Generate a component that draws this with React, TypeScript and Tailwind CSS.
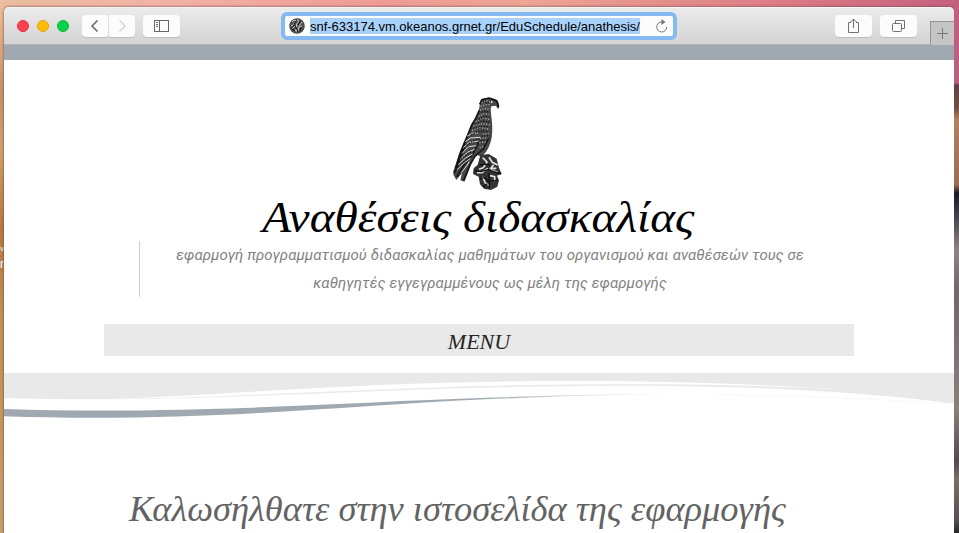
import type { ReactNode } from "react";

function ToolButton({ label, className, children }: { label: string; className: string; children: ReactNode }) {
  return (
    <button aria-label={label} className={`flex h-[22px] items-center justify-center bg-[#fcfcfc] shadow-[0_1px_0_#bdbdbd] ${className}`}>
      {children}
    </button>
  );
}

function Eagle() {
  return (
    <svg width="100" height="115" viewBox="0 0 300 345" fill="none" aria-label="Eagle emblem">
      <path fill="#484848" d="M152 45C160 37 180 36 192 41C204 44 209 54 207 69L203 71L198 62L184 64C180 75 184 88 185 102C187 120 188 139 185 159C180 180 174 195 162 208L154 217L143 210L128 221L118 251L103 290L91 286L96 264L79 285L70 269L70 258L77 240L86 209L100 174L113 145L123 118L140 94L147 73Z" />
      <path stroke="#151515" strokeWidth="5" d="M149 58L156 44L178 39L200 48L206 66M148 76L138 98L124 125L112 154L94 197L76 250M147 169L128 208L106 234L80 276M177 158L159 193L135 213L119 242L101 287M106 177L88 229L73 264" />
      <path stroke="#e2e2e2" strokeWidth="3" d="M112 153L127 145L145 144M106 170L122 159L150 157M100 188L117 172L145 168M96 205L116 185L139 182M91 222L112 202L134 193M85 239L107 219L128 207M82 253L101 235L121 220M94 263L109 244L118 230" />
      <path stroke="#b9b9b9" strokeWidth="4" strokeDasharray="3 5" d="M155 53L170 47L184 53M152 64L168 59L180 59M150 76L163 70L177 73M146 94L162 86L178 89M137 110L158 99L180 104M130 123L151 116L180 119M126 137L145 127L179 132M158 148L176 145M150 160L175 158M148 173L168 171M149 188L161 184" />
      <path stroke="#171717" strokeWidth="4" strokeDasharray="4 4" d="M159 48L171 54L184 49M154 81L164 80L179 81M145 103L164 94L177 96M137 117L156 108L180 112M130 130L152 124L178 126M123 150L148 139L178 140M155 153L175 152M152 166L169 165M110 181L127 169L148 162M94 222L112 207L126 199M83 247L103 229L116 218" />
      <circle cx="185" cy="51" r="3" fill="#eee" />
      <path fill="#333" d="M151 211L176 207L200 221L207 248L215 266L201 272L207 286L202 305L183 315L162 311L150 298L146 275L129 267L131 250L143 239Z" />
      <path stroke="#e4e4e4" strokeWidth="5" d="M158 218L171 231L160 248L147 253M177 217L187 232L203 240M173 250L156 263L141 263M183 255L202 261M158 276L166 294L177 301M180 272L194 275L194 289M191 239L182 250L199 250" />
      <path stroke="#101010" strokeWidth="4" d="M149 241L166 237L180 241M132 257L153 260L174 254L213 267M150 281L165 278L174 289L203 286M177 264L178 309M159 307L172 296" />
    </svg>
  );
}

function Wave() {
  return (
    <svg className="block" width="950" height="60" viewBox="0 0 950 60" aria-hidden="true">
      <defs>
        <linearGradient id="ribbon" x1="0" x2="1" y1="0" y2="0">
          <stop offset="0" stopColor="#a0a9b2" />
          <stop offset=".68" stopColor="#a0a9b2" />
          <stop offset="1" stopColor="#dce4ec" stopOpacity="0" />
        </linearGradient>
      </defs>
      <path fill="#e9e9e9" d="M0 0H950V30.5C850 18 744 12.7 616 12.7C400 13 230 27 106 26.2C70 26.3 34 26 0 25Z" />
      <path fill="#fff" d="M106 25.8C245 21 355 8 576 8C670 8.2 746 11 831 16C745 12 690 11.2 600 11.2C390 12.3 245 24.8 106 25.8Z" />
      <path fill="url(#ribbon)" d="M0 36C180 42 347 29 476 25C570 21.8 620 21 710 20.8C622 21.4 550 23.2 476 26.6C350 32 198 50 0 43.3Z" />
      <path fill="none" stroke="#f9f9f9" d="M710 22C790 22 870 26 950 31" />
    </svg>
  );
}

export default function App() {
  return (
    <main className="h-[533px] w-[959px] overflow-hidden bg-[linear-gradient(90deg,#eabd9d,#f2b2a6_18%,#ee9b95_40%,#eda594_55%,#dc7b84_82%,#c4607f)]">
      <div className="flex h-full">
        <div className="flex w-1 shrink-0 flex-col bg-[linear-gradient(#f0c1a0,#c69368_17%,#d1a16b_28%,#b77a43_43%,#c29155_59%,#c6a16b)] pt-[242px] font-['Liberation_Sans',sans-serif] text-white">
          <span className="text-[8px] leading-[14px]">v</span>
          <span className="text-xs leading-4">r</span>
        </div>
        <div className="flex h-full w-[950px] shrink-0 flex-col pt-[7px]">
          <section className="min-h-0 flex-1 overflow-hidden rounded-t-[5px] bg-white shadow-[0_0_3px_#6b4549]">
            <header className="flex h-[38px] items-start border-t border-[#f5f5f5] bg-linear-to-b from-[#ebebeb] to-[#d3d3d3] shadow-[inset_0_-1px_0_#b5b5b5]">
              <div className="flex gap-2 pl-[13px] pt-[12px]">
                <span className="size-3 rounded-full border border-[#e53242] bg-[#ff404d]" />
                <span className="size-3 rounded-full border border-[#e6a116] bg-[#ffbd06]" />
                <span className="size-3 rounded-full border border-[#0cb839] bg-[#05d448]" />
              </div>
              <nav className="ml-[13px] mt-[7px] flex gap-px">
                <ToolButton label="Back" className="w-[26px] rounded-l-[4px] rounded-r-[2px]">
                  <svg width="10" height="14" fill="none" stroke="#656565" strokeWidth="1.5"><path d="M7.5 1.5L2 7l5.5 5.5" /></svg>
                </ToolButton>
                <ToolButton label="Forward" className="w-[26px] rounded-l-[2px] rounded-r-[4px]">
                  <svg width="10" height="14" fill="none" stroke="#d1d1d1" strokeWidth="1.3"><path d="M2.5 1.5L8 7l-5.5 5.5" /></svg>
                </ToolButton>
              </nav>
              <div className="ml-2 mt-[7px]">
                <ToolButton label="Show sidebar" className="w-[37px] rounded-[4px]">
                  <svg width="15" height="12" fill="none" stroke="#686868"><rect x=".5" y=".5" width="14" height="11" /><path d="M5.5 0v12M2 2.5h2M2 4.5h2M2 6.5h2" /></svg>
                </ToolButton>
              </div>
              <div className="ml-[101px] mt-[4px] flex h-[28px] w-[396px] items-center rounded-[6px] border-[4px] border-[#84b9f2] bg-[#fcfcfc] pl-1 pr-[5px]">
                <svg width="16" height="16" fill="none"><circle cx="8" cy="8" r="7.8" fill="#4d4d4d" /><path d="M3 4l2-2 2 1-3 4-2 1m6-6l2 1-3 4 3 1 3-4M3 11l4-4 1 3-2 3m3 0l1-4 3-1M7 14l1-3" stroke="#c7c7c7" /><path d="M7 3L4 9m7-6l-2 5m3 1l-1 4M2 10l4 3M6 7l3 7" stroke="#101010" /></svg>
                <span className="ml-[5px] flex h-4 w-[330px] items-center whitespace-nowrap bg-[#a9d2fb] pt-px font-['Liberation_Sans',Arial,sans-serif] text-[13px] tracking-[-0.02px] text-black">snf-633174.vm.okeanos.grnet.gr/EduSchedule/anathesis/</span>
                <svg className="ml-auto" width="13" height="14" fill="none"><path d="M7 3a5 5 0 1 0 4.7 5" stroke="#777" /><path d="M6.5 0l4 3-4 3z" fill="#777" /></svg>
              </div>
              <div className="ml-[158px] mt-[7px] flex gap-2">
                <ToolButton label="Share" className="w-[37px] rounded-[4px]">
                  <svg width="13" height="16" fill="none" stroke="#717171"><path d="M4 4.5H1.5v10h10v-10H9M6.5 10V1M3.5 4l3-3 3 3" /></svg>
                </ToolButton>
                <ToolButton label="Show all tabs" className="w-[37px] rounded-[4px]">
                  <svg width="13" height="13" fill="none" stroke="#717171"><rect x=".5" y="3.5" width="9" height="8" rx="1" /><path d="M3.5 3.5v-3h9v8h-3" /></svg>
                </ToolButton>
              </div>
              <button aria-label="New tab" className="ml-[13px] mt-[13px] flex h-6 w-6 items-center justify-center border-l border-t border-[#949494] bg-[#c5c5c5]">
                <svg width="11" height="11" stroke="#777"><path d="M0 5.5h11M5.5 0v11" /></svg>
              </button>
            </header>
            <div className="h-[15px] bg-[#a0a9b2]" />

            <div className="mt-[25px] flex h-[107px] pl-[426px]"><Eagle /></div>
            <h1 className="flex h-[49px] items-center justify-center whitespace-nowrap pt-px pr-[2px] font-['Liberation_Serif',Georgia,serif] text-[44px] leading-[49px] font-normal italic text-black"><span className="inline-block scale-x-[1.079]">Αναθέσεις διδασκαλίας</span></h1>
            <p className="ml-[135px] h-14 w-[701px] border-l border-[#ccc] text-center font-['Roboto',sans-serif] text-[15px] leading-7 italic tracking-[.09px] text-[#828282]">
              εφαρμογή προγραμματισμού διδασκαλίας μαθημάτων του οργανισμού και αναθέσεών τους σε<br />
              καθηγητές εγγεγραμμένους ως μέλη της εφαρμογής
            </p>
            <button className="mt-[27px] ml-[100px] flex h-8 w-[750px] items-center justify-center bg-[#e9e9e9] pt-[3px] font-['Liberation_Serif',serif] text-[22px] italic text-[#242424]">MENU</button>
            <div className="mt-[17px]"><Wave /></div>
            <h2 className="ml-[125px] mt-[57px] whitespace-nowrap font-['Liberation_Serif',Georgia,serif] text-[35px] leading-[40px] font-normal italic text-[#636363]"><span className="inline-block origin-left scale-x-[1.042]">Καλωσήλθατε στην ιστοσελίδα της εφαρμογής</span></h2>
          </section>
        </div>
        <div className="flex-1 bg-[linear-gradient(#c4607f_0,#b85f81_83px,#614143_85px,#704e45_108px,#b48162_120px,#9c6b54_185px,#171a25_193px,#393642_210px,#8c8583_250px,#706869_290px,#8b7e7d_410px,#544b4d_460px,#796c6a_480px,#575150_520px,#27252b)]" />
      </div>
    </main>
  );
}
